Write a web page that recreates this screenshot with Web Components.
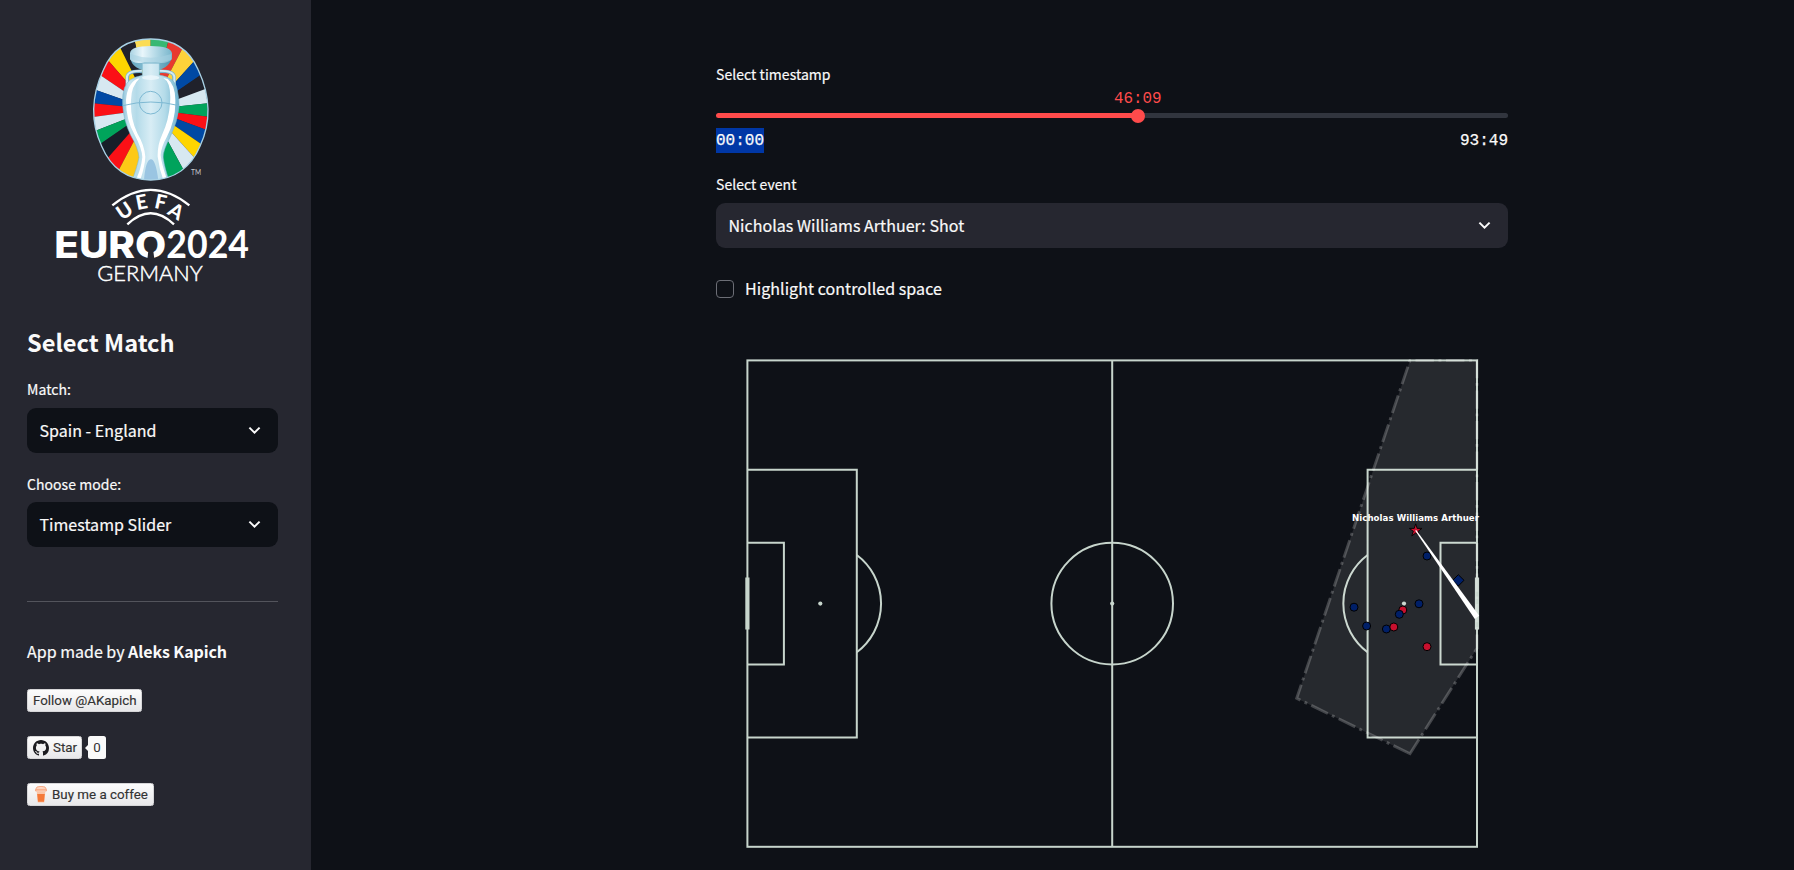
<!DOCTYPE html>
<html lang="en">
<head>
<meta charset="utf-8">
<title>Euro 2024</title>
<style>
html, body { margin: 0; height: 100%; background: #0e1117; }
body { font-family: "Noto Sans CJK SC", "Noto Sans", sans-serif; color: #fafafa; overflow: hidden; }
</style>
</head>
<body>
<match-app></match-app>
<script>
const define = (name, html, setup) => customElements.define(name, class extends HTMLElement {
  constructor() {
    super();
    this.attachShadow({ mode: 'open' }).innerHTML = html;
  }
  connectedCallback() { if (setup) setup(this, this.shadowRoot); }
});

/* ---- tournament logo ---- */
const wedge = (pts, cols) => cols.map((c, i) => {
  const far = ([x, y]) => [332 + (x - 332) * 1.3, 268 + (y - 268) * 1.3].map(n => n.toFixed(1)).join(' ');
  return `<path fill="${c}" d="M332 268L${far(pts[i])}L${far(pts[i + 1])}Z"/>`;
}).join('');
const left = wedge([[332,57],[284,63],[240,82],[205,122],[180,165],[167,210],[163,250],[166,290],[172,330],[184,370],[205,412],[238,447],[290,480]],
  ['#fbdc55','#21222c','#fed500','#fb1016','#d7e8f1','#0049a4','#fb1016','#d7e8f1','#00a45b','#171e29','#fb1016','#fdc916']);
const right = wedge([[332,57],[384,68],[425,90],[462,124],[482,165],[494,208],[500,250],[500,290],[495,328],[483,372],[460,410],[428,445],[375,480]],
  ['#38b873','#e8382f','#fed23a','#0049a4','#20212b','#d7e8f1','#00a35c','#fb1016','#0049a4','#fed500','#d7e8f1','#00a35c']);
const oval = 'M332 57C400 57 449 90 475 150C512 230 512 310 480 379C454 440 405 480 332 480C259 480 211 440 185 379C153 310 153 230 190 150C215 90 264 57 332 57Z';
define('euro-logo', `
<style>:host{display:block;width:230px;height:270px} svg{display:block}</style>
<svg width="230" height="270" viewBox="0 0 690 810">
  <defs>
    <clipPath id="oval"><path d="${oval}"/></clipPath>
    <linearGradient id="body"><stop offset="0" stop-color="#8fc3da"/><stop offset=".12" stop-color="#c9e4ef"/><stop offset=".25" stop-color="#b4dbe9"/><stop offset=".5" stop-color="#d8edf5"/><stop offset=".75" stop-color="#b4dbe9"/><stop offset="1" stop-color="#6fb3cf"/></linearGradient>
    <linearGradient id="cap"><stop offset="0" stop-color="#a9d3e3"/><stop offset=".3" stop-color="#e9f6fb"/><stop offset=".6" stop-color="#b7dbe8"/><stop offset="1" stop-color="#78b5cb"/></linearGradient>
    <linearGradient id="rim"><stop offset="0" stop-color="#66a8c2"/><stop offset=".5" stop-color="#8fc3d6"/><stop offset="1" stop-color="#4d93ae"/></linearGradient>
  </defs>
  <g clip-path="url(#oval)">
    ${left}${right}
    <path fill="none" stroke="#7bb5cd" stroke-width="11" d="M262 196V170Q264 152 306 154M402 196V170Q400 152 358 154"/>
    <path fill="none" stroke="#d3eaf3" stroke-width="6" d="M261 196V170Q263 152 306 152M403 196V170Q401 152 358 152"/>
    <path fill="url(#rim)" d="M270 112Q276 152 332 152T395 112Z"/>
    <path fill="url(#cap)" d="M270 100Q272 78 332 78T396 100V118Q380 134 345 127H315Q280 134 270 118Z"/>
    <path fill="#a7d2e2" d="M272 102Q332 124 394 102L393 120Q332 138 272 118Z" opacity=".55"/>
    <path fill="url(#body)" stroke="#79b4cc" stroke-width="1.5" d="M307 130H358V165Q406 173 411 206Q418 235 417 262Q413 305 391 350Q366 397 370 415Q374 445 390 490H273Q292 440 297 412Q295 385 272 346Q250 300 248 255Q246 225 253 204Q262 174 307 166Z"/>
    <path fill="#fff" d="M292 176Q262 190 258 240Q258 300 284 345Q306 385 307 412Q303 450 285 485H299Q315 440 316 410Q313 375 292 340Q270 295 273 240Q274 198 299 175ZM370 174Q395 188 390 250Q387 300 366 345Q352 375 353 410Q358 450 372 485H383Q364 430 362 405Q364 380 380 352Q407 300 406 245Q407 195 383 177Z"/>
    <path fill="#9ac5e2" d="M311 490Q316 420 332 418T356 490Z"/>
    <ellipse cx="332" cy="173" rx="26" ry="7" fill="#eef8fc" opacity=".8"/>
    <g fill="none" stroke="#7db8d2" stroke-width="3"><circle cx="332" cy="248" r="34"/><path d="M248 257Q332 235 418 257"/></g>
  </g>
  <path fill="none" stroke="#a9d2e6" stroke-width="4" d="${oval}"/>
  <text x="453" y="465" font-family="Lato" font-size="24" textLength="30" lengthAdjust="spacingAndGlyphs" fill="#c7c8cc">TM</text>
  <g transform="translate(0 450)" fill="#fff" font-family="Lato">
    <g fill="none" stroke="#fff" stroke-width="7"><path d="M217 106Q332 13 448 106M262 163Q332 96 402 163"/></g>
    <g font-weight="900" font-size="60" text-anchor="middle">
      <text transform="translate(265 140) rotate(-34)">U</text>
      <text transform="translate(309 117) rotate(-11)">E</text>
      <text transform="translate(358 117) rotate(12)">F</text>
      <text transform="translate(397 142) rotate(32)">A</text>
    </g>
    <text x="43" y="263" font-family="Inter" font-weight="800" font-size="110" textLength="336" lengthAdjust="spacingAndGlyphs">EURO</text>
    <path fill="#262730" d="M325 243H340L343 268H322Z"/>
    <text x="379" y="263" font-weight="700" font-size="113" textLength="248" lengthAdjust="spacingAndGlyphs">2024</text>
    <text x="172" y="332" font-weight="300" font-size="62" stroke="#fff" stroke-width="1.4" textLength="316" lengthAdjust="spacingAndGlyphs">GERMANY</text>
  </g>
</svg>`);

/* ---- select box ---- */
define('select-box', `
<style>
:host{display:block;-webkit-text-stroke:.2px currentColor}
label{display:block;font-size:14px;line-height:var(--lh,18px);height:20px;margin-bottom:8px;white-space:nowrap;letter-spacing:.05px}
.box{box-sizing:border-box;height:45px;border-radius:9px;background:var(--box,#0e1117);display:flex;align-items:center;justify-content:space-between;padding:0 17px 0 12.4px;font-size:16px;line-height:24px;letter-spacing:.04px}
.box span{padding-bottom:2px}
svg{display:block;width:13px;height:9px}
</style>
<label><slot name="label"></slot></label>
<div class="box"><span><slot></slot></span><svg viewBox="0 0 13 9"><path d="M1.4 1.6L6.5 6.6L11.6 1.6" fill="none" stroke="#fafafa" stroke-width="2"/></svg></div>`);

/* ---- badges ---- */
define('link-badge', `
<style>
:host{display:flex;align-items:center;height:23px}
.btn{box-sizing:border-box;height:23px;width:var(--w);border-radius:2.5px;background:linear-gradient(#fcfcfc,#e8e8ea);border:1px solid #d6d6d8;color:#333;font:13.35px/21px Roboto,"Liberation Sans",sans-serif;padding:0 0 0 5px;display:flex;align-items:center;white-space:nowrap}
.btn span{display:block;-webkit-text-stroke:.15px #333}
::slotted(svg){flex:none}
</style>
<div class="btn"><slot name="icon"></slot><span><slot></slot></span></div><slot name="count"></slot>`);
define('count-bubble', `
<style>
:host{display:block;position:relative;margin-left:6px;width:18px;height:23px;border-radius:2.5px;background:#fafafa;color:#333;font:13.35px/23px Roboto,"Liberation Sans",sans-serif;text-align:center}
i{position:absolute;left:-3px;top:8px;border:solid transparent;border-width:4px 4px 4px 0;border-right-color:#fafafa}
</style><i></i><slot></slot>`);

/* ---- slider ---- */
define('time-slider', `
<style>
:host{display:block}
label{display:block;font-size:14px;line-height:18px;height:20px;-webkit-text-stroke:.2px currentColor;letter-spacing:.05px}
.val{height:19px;margin:4px 0 5px;padding-left:53.26%;line-height:20px;color:#ff4b4b;font-family:"Liberation Mono",monospace;font-size:15.9px}
.val span{display:inline-block;transform:translateX(-50%)}
.track{height:5px;border-radius:3px;background:linear-gradient(90deg,#ff4b4b 53.3%,#31353e 53.3%);display:flex;align-items:center;padding-left:calc(53.26% - 7px)}
.thumb{width:14px;height:14px;border-radius:50%;background:#ff4b4b;flex:none}
.ends{display:flex;justify-content:space-between;height:25px;margin-top:10px;font:16px/27px "Liberation Mono",monospace;-webkit-text-stroke:.25px #fafafa}
mark{display:block;height:25px;background:#0037a6;color:inherit}
</style>
<label><slot></slot></label>
<div class="val"><span>46:09</span></div>
<div class="track"><div class="thumb"></div></div>
<div class="ends"><mark>00:00</mark><span>93:49</span></div>`);

define('check-box', `
<style>:host{display:flex;align-items:center;gap:11px;font-size:16px;line-height:24px;height:24px;letter-spacing:.06px;-webkit-text-stroke:.2px currentColor}
i{box-sizing:border-box;width:18px;height:18px;border:1px solid #6c6e76;border-radius:4px}span{padding-bottom:2px}</style><i></i><span><slot></slot></span>`);

/* ---- pitch: 120 x 80 units, 6.08 px each ---- */
define('shot-pitch', `
<style>:host{display:block;height:540px} svg{display:block}</style>
<svg width="792" height="540" viewBox="716 330 792 540">
  <g fill="none" stroke="#c7d5cc" stroke-width="2">
    <rect x="747.4" y="360.4" width="729.6" height="486.4"/>
    <path d="M1112.2 360.4V846.8M747.4 469.8H856.8V737.4H747.4M1477 469.8H1367.6V737.4H1477M747.4 542.8H783.9V664.4H747.4M1477 542.8H1440.5V664.4H1477"/>
    <circle cx="1112.2" cy="603.6" r="60.8"/>
    <path d="M856.8 555A60.8 60.8 0 0 1 856.8 652.2M1367.6 555A60.8 60.8 0 0 0 1367.6 652.2"/>
  </g>
  <path d="M747.4 577.5V629.6M1477 577.5V629.6" stroke="#c7d5cc" stroke-width="4.2"/>
  <g fill="#c7d5cc"><circle cx="820.3" cy="603.6" r="2.1"/><circle cx="1112.2" cy="603.6" r="2.1"/><circle cx="1404" cy="603.6" r="2.1"/></g>
  <path d="M1410 753.7L1296.7 698.3L1410 360.4H1477V648.3Z" fill="#fff" fill-opacity=".1"/>
  <path d="M1410 753.7L1296.7 698.3L1410 360.4H1477V648.3Z" fill="none" stroke="#fff" stroke-opacity=".22" stroke-width="2.9" stroke-dasharray="18.4 4.6 2.9 4.6"/>
  <g stroke="#000" stroke-width="1" id="dots"></g>
  <path d="M1415.7 523.9L1417.2 528.4H1422L1418.1 531.3L1419.6 535.9L1415.7 533L1411.8 535.9L1413.3 531.3L1409.4 528.4H1414.2Z" fill="#c8102e" stroke="#000" stroke-width=".9"/>
  <path d="M1415.2 530.7L1416.2 530L1479.2 615.8L1474.8 618.9Z" fill="#fff"/>
  <text x="1352" y="520.8" font-family="DejaVu Sans" font-weight="700" font-size="8.6" fill="#fff" textLength="127">Nicholas Williams Arthuer</text>
</svg>`, (el, root) => {
  const blue = '#001f68', red = '#c8102e';
  const players = [[1427,556,blue],[1419,603.8,blue],[1354,607.2,blue],[1366.6,626,blue],[1402.8,610,red],[1399.3,614.3,blue],[1386.4,629,blue],[1393.8,627,red],[1427,646.7,red]];
  root.querySelector('#dots').innerHTML = players.map(([x, y, c]) => `<circle cx="${x}" cy="${y}" r="4" fill="${c}"/>`).join('') +
    `<path d="M1458.3 574.7L1464 580.3L1458.3 586L1452.7 580.3Z" fill="${blue}"/>`;
});

define('match-app', `
<style>
:host{display:flex;height:100vh}
aside{box-sizing:border-box;width:311px;background:#262730;padding:20px 33px 0 27px;flex:none}
euro-logo{margin-left:13px}
h2{margin:34px 0 0;font-size:23.6px;line-height:36px;font-weight:700;height:36px}
.m{margin-top:20px}.c{margin-top:21px;--lh:20px}
hr{border:0;height:1px;background:#53545c;margin:54px 0 37px}
p{margin:0 0 25px;font-size:16px;line-height:24px;height:25px;white-space:nowrap;-webkit-text-stroke:.2px currentColor}
b{letter-spacing:-.1px;-webkit-text-stroke:0}
link-badge+link-badge{margin-top:24px}
.gh{width:16px;height:16px;margin-right:4px}.cup{width:12px;height:17px;margin:0 5px 0 2px}
main{flex:1;padding:65px 0 0 405px}
.col{width:792px}
select-box.e{--box:#262730;margin-top:22px}
check-box{margin:29px 0 0}
shot-pitch{margin-top:29px}
</style>
<aside>
  <euro-logo></euro-logo>
  <h2>Select Match</h2>
  <select-box class="m"><span slot="label">Match:</span>Spain - England</select-box>
  <select-box class="c"><span slot="label">Choose mode:</span>Timestamp Slider</select-box>
  <hr>
  <p>App made by <b>Aleks Kapich</b></p>
  <link-badge style="--w:115px">Follow @AKapich</link-badge>
  <link-badge style="--w:55px"><svg class="gh" slot="icon" viewBox="0 0 16 16"><path fill="#1b1b1f" d="M8 0C3.58 0 0 3.58 0 8c0 3.54 2.29 6.53 5.47 7.59.4.07.55-.17.55-.38 0-.19-.01-.82-.01-1.49-2.01.37-2.53-.49-2.69-.94-.09-.23-.48-.94-.82-1.13-.28-.15-.68-.52-.01-.53.63-.01 1.08.58 1.23.82.72 1.21 1.87.87 2.33.66.07-.52.28-.87.51-1.07-1.78-.2-3.64-.89-3.64-3.95 0-.87.31-1.59.82-2.15-.08-.2-.36-1.02.08-2.12 0 0 .67-.21 2.2.82.64-.18 1.32-.27 2-.27s1.36.09 2 .27c1.53-1.04 2.2-.82 2.2-.82.44 1.1.16 1.92.08 2.12.51.56.82 1.27.82 2.15 0 3.07-1.87 3.75-3.65 3.95.29.25.54.73.54 1.48 0 1.07-.01 1.93-.01 2.2 0 .21.15.46.55.38A8.01 8.01 0 0 0 16 8c0-4.42-3.58-8-8-8z"/></svg>Star<count-bubble slot="count">0</count-bubble></link-badge>
  <link-badge style="--w:127px"><svg class="cup" slot="icon" viewBox="0 0 12 17"><path fill="#ffd9c5" stroke="#f49a70" stroke-width=".8" d="M2 1Q6-.3 10 1L11.4 3.4V5H.6V3.4Z"/><path stroke="#f49a70" stroke-width=".7" d="M.8 3.4H11.2"/><path fill="#fbc6a8" d="M1.7 5.5H10.3L9.3 16.5H2.7Z"/><path fill="#f47a3a" d="M2.2 8H9.8L9 15.7H3Z"/></svg>Buy me a coffee</link-badge>
</aside>
<main><div class="col">
  <time-slider>Select timestamp</time-slider>
  <select-box class="e"><span slot="label">Select event</span>Nicholas Williams Arthuer: Shot</select-box>
  <check-box>Highlight controlled space</check-box>
  <shot-pitch></shot-pitch>
</div></main>`);
</script>
</body>
</html>
